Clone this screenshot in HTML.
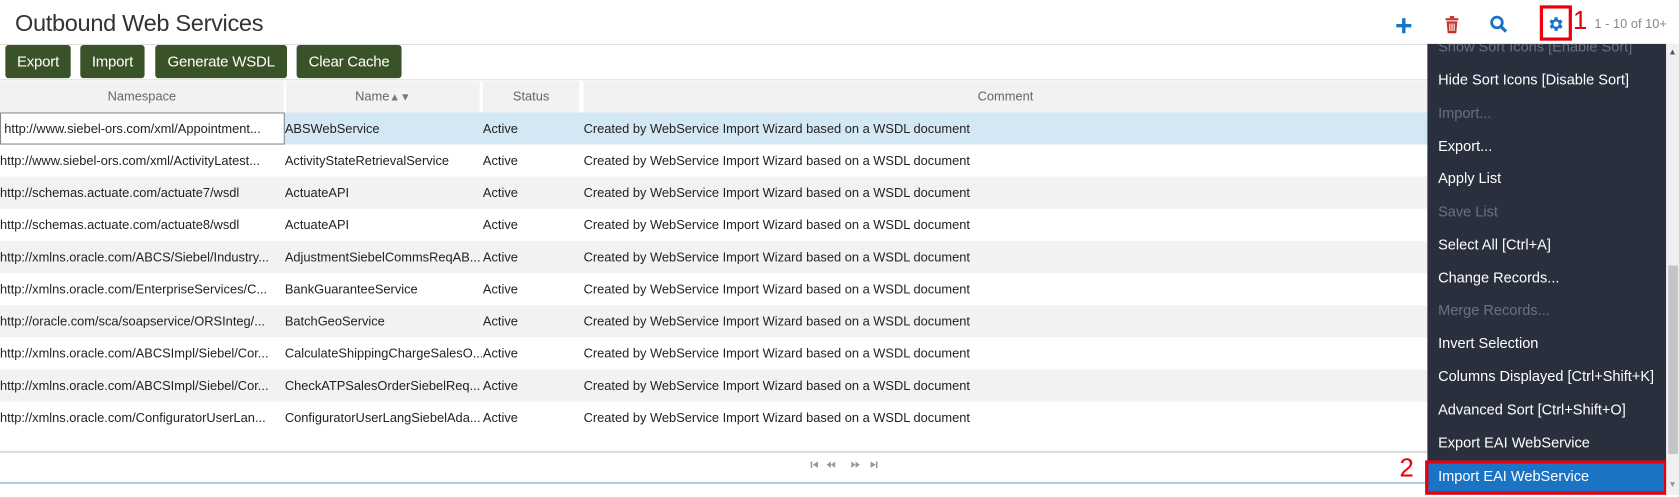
<!DOCTYPE html>
<html><head><style>
*{margin:0;padding:0;box-sizing:border-box}
body{width:1679px;height:497px;background:#fff;font-family:"Liberation Sans",sans-serif;overflow:hidden;color:#222}
#w{position:absolute;left:0;top:0;width:1568px;height:464px;transform:scale(1.07079);transform-origin:0 0}
.abs{position:absolute}
.title{left:14px;top:9px;font-size:22px;color:#333;letter-spacing:-0.3px}
.bar{left:0;top:41px;width:1333px;height:33px;border-top:1px solid #ddd;background:#fff}
.btn{position:absolute;top:42px;height:31px;background:#3a5228;color:#fff;font-size:14px;line-height:31px;text-align:center;border-radius:3px;letter-spacing:-0.2px}
.hdr{left:0;top:74px;width:1333px;height:31px;background:#fff;border-top:1px solid #ddd}
.hc{position:absolute;top:1px;height:29px;background:#f2f2f2;color:#666;font-size:12px;line-height:29px;text-align:center}
.row{position:absolute;left:0;width:1333px;height:30px;font-size:12px;line-height:30px;color:#222}
.row span{position:absolute;top:0;white-space:nowrap;overflow:hidden}
.menu{left:1333px;top:41px;width:223px;height:420px;background:#2a2f3e;overflow:hidden}
.mi{position:absolute;left:10px;font-size:13.6px;color:#fff;white-space:nowrap}
.dis{color:#6b7080}
</style></head><body><div id="w">
<div class="abs title">Outbound Web Services</div>
<div class="abs bar"></div>
<div class="btn" style="left:5px;width:61px">Export</div>
<div class="btn" style="left:75px;width:60px">Import</div>
<div class="btn" style="left:145px;width:123px">Generate WSDL</div>
<div class="btn" style="left:277px;width:98px">Clear Cache</div>
<div class="abs hdr">
<div class="hc" style="left:0;width:265px">Namespace</div>
<div class="hc" style="left:267px;width:181px">Name<span style="color:#777;font-size:10px">▲▼</span></div>
<div class="hc" style="left:451px;width:90px">Status</div>
<div class="hc" style="left:545px;width:788px">Comment</div>
</div>
<div class="abs" style="left:0;top:105px;width:1333px;height:300px">
<div class="row" style="top:0;background:#d4e7f4"><span style="left:0;width:266px;height:30px;background:#fff;border:1px solid #888;padding-left:3px;line-height:28px">http://www.siebel-ors.com/xml/Appointment...</span><span style="left:266px">ABSWebService</span><span style="left:451px">Active</span><span style="left:545px">Created by WebService Import Wizard based on a WSDL document</span></div>
<div class="row" style="top:30px"><span style="left:0;width:264px">http://www.siebel-ors.com/xml/ActivityLatest...</span><span style="left:266px;width:184px">ActivityStateRetrievalService</span><span style="left:451px">Active</span><span style="left:545px">Created by WebService Import Wizard based on a WSDL document</span></div>
<div class="row" style="top:60px;background:#f2f2f2"><span style="left:0;width:264px">http://schemas.actuate.com/actuate7/wsdl</span><span style="left:266px;width:184px">ActuateAPI</span><span style="left:451px">Active</span><span style="left:545px">Created by WebService Import Wizard based on a WSDL document</span></div>
<div class="row" style="top:90px"><span style="left:0;width:264px">http://schemas.actuate.com/actuate8/wsdl</span><span style="left:266px;width:184px">ActuateAPI</span><span style="left:451px">Active</span><span style="left:545px">Created by WebService Import Wizard based on a WSDL document</span></div>
<div class="row" style="top:120px;background:#f2f2f2"><span style="left:0;width:264px">http://xmlns.oracle.com/ABCS/Siebel/Industry...</span><span style="left:266px;width:184px">AdjustmentSiebelCommsReqAB...</span><span style="left:451px">Active</span><span style="left:545px">Created by WebService Import Wizard based on a WSDL document</span></div>
<div class="row" style="top:150px"><span style="left:0;width:264px">http://xmlns.oracle.com/EnterpriseServices/C...</span><span style="left:266px;width:184px">BankGuaranteeService</span><span style="left:451px">Active</span><span style="left:545px">Created by WebService Import Wizard based on a WSDL document</span></div>
<div class="row" style="top:180px;background:#f2f2f2"><span style="left:0;width:264px">http://oracle.com/sca/soapservice/ORSInteg/...</span><span style="left:266px;width:184px">BatchGeoService</span><span style="left:451px">Active</span><span style="left:545px">Created by WebService Import Wizard based on a WSDL document</span></div>
<div class="row" style="top:210px"><span style="left:0;width:264px">http://xmlns.oracle.com/ABCSImpl/Siebel/Cor...</span><span style="left:266px;width:184px">CalculateShippingChargeSalesO...</span><span style="left:451px">Active</span><span style="left:545px">Created by WebService Import Wizard based on a WSDL document</span></div>
<div class="row" style="top:240px;background:#f2f2f2"><span style="left:0;width:264px">http://xmlns.oracle.com/ABCSImpl/Siebel/Cor...</span><span style="left:266px;width:184px">CheckATPSalesOrderSiebelReq...</span><span style="left:451px">Active</span><span style="left:545px">Created by WebService Import Wizard based on a WSDL document</span></div>
<div class="row" style="top:270px"><span style="left:0;width:264px">http://xmlns.oracle.com/ConfiguratorUserLan...</span><span style="left:266px;width:184px">ConfiguratorUserLangSiebelAda...</span><span style="left:451px">Active</span><span style="left:545px">Created by WebService Import Wizard based on a WSDL document</span></div>
</div>
<div class="abs" style="left:0;top:421px;width:1333px;height:2px;background:#ddd"></div>
<svg class="abs" style="left:757px;top:430px" width="70" height="8"><g fill="#999"><rect x="0" y="1" width="1.5" height="6"/><path d="M7 1v6L2 4z"/><path d="M19 1v6L15 4zM23 1v6L19 4z"/><path d="M38 1v6l4-3zM42 1v6l4-3z"/><path d="M56 1v6l5-3z"/><rect x="61" y="1" width="1.5" height="6"/></g></svg>
<div class="abs" style="left:0;top:450px;width:1556px;height:2px;background:#a9cdea"></div>
<svg class="abs" style="left:1302px;top:15px" width="18" height="18"><path d="M9 2v14M2 9h14" stroke="#1a73c4" stroke-width="3.2"/></svg>
<svg class="abs" style="left:1348px;top:14px" width="16" height="18"><rect x="2" y="3" width="12" height="2" fill="#c9302c"/><rect x="6" y="1" width="4" height="2" fill="#c9302c"/><path d="M3 6h10l-1 11H4z" fill="#c9302c"/><path d="M6 8v7M8 8v7M10 8v7" stroke="#fff" stroke-width="1"/></svg>
<svg class="abs" style="left:1391px;top:14px" width="18" height="18"><circle cx="7" cy="7" r="5" fill="none" stroke="#1a73c4" stroke-width="2.6"/><path d="M10.5 10.5l5 5" stroke="#1a73c4" stroke-width="3"/></svg>
<div class="abs" style="left:1438px;top:5px;width:30px;height:33px;border:3px solid #e8000f"></div>
<svg class="abs" style="left:1444px;top:14px" width="17" height="17" viewBox="0 0 24 24"><path fill="#1a73c4" d="M19.4 13a7.5 7.5 0 000-2l2.1-1.6-2-3.5-2.5 1a7 7 0 00-1.7-1L15 3h-4l-.4 2.9a7 7 0 00-1.7 1l-2.5-1-2 3.5L6.6 11a7.5 7.5 0 000 2l-2.1 1.6 2 3.5 2.5-1a7 7 0 001.7 1L11 21h4l.4-2.9a7 7 0 001.7-1l2.5 1 2-3.5zM13 15.5a3.5 3.5 0 110-7 3.5 3.5 0 010 7z"/></svg>
<div class="abs" style="left:1469px;top:6px;font-size:24px;color:#e8000f">1</div>
<div class="abs" style="left:1489px;top:15px;font-size:12px;color:#888">1 - 10 of 10+</div>
<div class="abs menu">
<div class="mi dis" style="top:-5px">Show Sort Icons [Enable Sort]</div>
<div class="mi" style="top:26px">Hide Sort Icons [Disable Sort]</div>
<div class="mi dis" style="top:57px">Import...</div>
<div class="mi" style="top:88px">Export...</div>
<div class="mi" style="top:118px">Apply List</div>
<div class="mi dis" style="top:149px">Save List</div>
<div class="mi" style="top:180px">Select All [Ctrl+A]</div>
<div class="mi" style="top:211px">Change Records...</div>
<div class="mi dis" style="top:241px">Merge Records...</div>
<div class="mi" style="top:272px">Invert Selection</div>
<div class="mi" style="top:303px">Columns Displayed [Ctrl+Shift+K]</div>
<div class="mi" style="top:334px">Advanced Sort [Ctrl+Shift+O]</div>
<div class="mi" style="top:365px">Export EAI WebService</div>
</div>
<div class="abs" style="left:1331px;top:430px;width:226px;height:32px;background:#1a73c4;border:3px solid #e8000f"></div>
<div class="abs" style="left:1343px;top:437px;font-size:13.6px;color:#fff">Import EAI WebService</div>
<div class="abs" style="left:1307px;top:424px;font-size:24px;color:#e8000f">2</div>
<div class="abs" style="left:1556px;top:41px;width:13px;height:421px;background:#f0f0f0"></div>
<div class="abs" style="left:1558px;top:248px;width:9px;height:176px;background:#c4c4c4"></div>
<div class="abs" style="left:1558px;top:44px;font-size:8px;color:#555">▲</div>
<div class="abs" style="left:1558px;top:448px;font-size:8px;color:#999">▼</div>
</div></body></html>
